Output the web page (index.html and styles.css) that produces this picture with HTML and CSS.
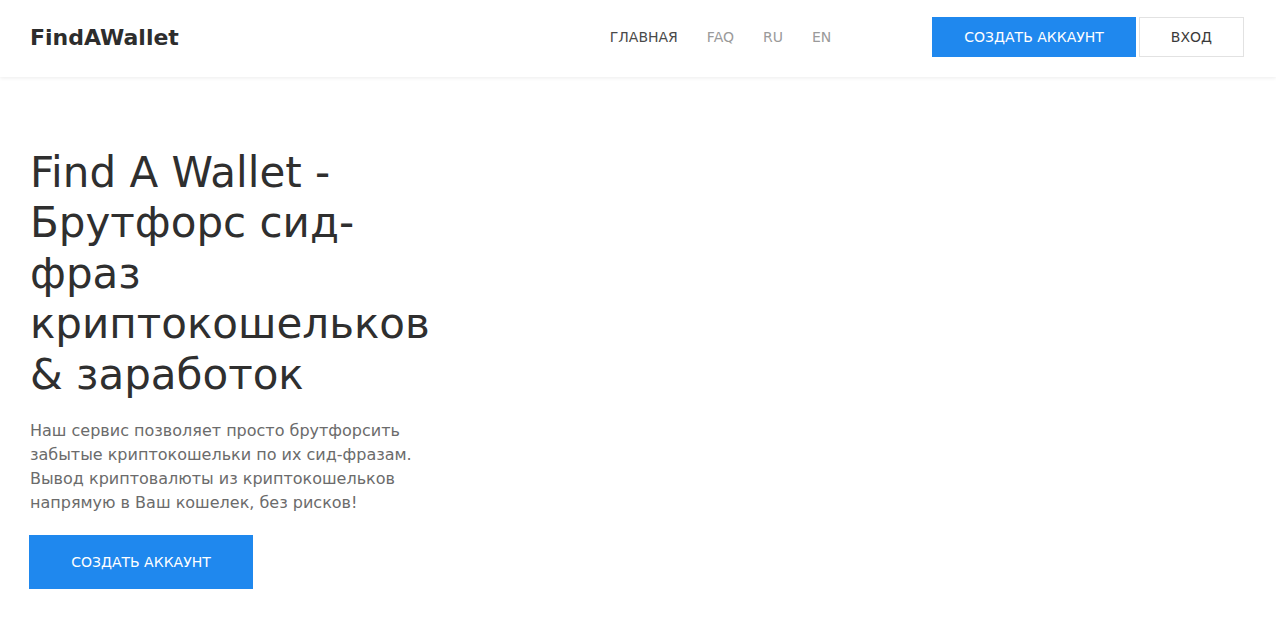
FILE: index.html
```
<!DOCTYPE html>
<html lang="ru">

<head>
    <meta charset="UTF-8">
    <meta name="viewport" content="width=device-width, initial-scale=1.0">
    <title>FindAWallet</title>
    <link rel="stylesheet" href="styles.css">
</head>

<body>
    <header class="header">
        <div class="header__inner">
            <a class="header__logo" href="#">FindAWallet</a>
            <nav class="header__nav">
                <a class="header__link header__link--active" href="#">ГЛАВНАЯ</a>
                <a class="header__link" href="#">FAQ</a>
                <a class="header__link" href="#">RU</a>
                <a class="header__link" href="#">EN</a>
            </nav>
            <div class="header__actions">
                <a class="btn btn--primary" href="#">СОЗДАТЬ АККАУНТ</a>
                <a class="btn btn--outline" href="#">ВХОД</a>
            </div>
        </div>
    </header>

    <main class="hero">
        <div class="hero__content">
            <h1 class="hero__title">Find A Wallet - Брутфорс сид-фраз криптокошельков &amp; заработок</h1>
            <p class="hero__text">
                Наш сервис позволяет просто брутфорсить забытые криптокошельки по их сид-фразам.
                Вывод криптовалюты из криптокошельков напрямую в Ваш кошелек, без рисков!
            </p>
            <a class="btn btn--primary btn--large" href="#">СОЗДАТЬ АККАУНТ</a>
        </div>
    </main>
</body>

</html>
```

FILE: styles.css
```
* {
    box-sizing: border-box;
}

body {
    margin: 0;
    font-family: "DejaVu Sans", "Open Sans", sans-serif;
    color: #333333;
    background: #ffffff;
}

a {
    text-decoration: none;
}

/* header */
.header {
    background: #ffffff;
    box-shadow: 0 1px 4px rgba(0, 0, 0, 0.08);
}

.header__inner {
    height: 77px;
    padding: 0 32px 3px 30px;
    display: flex;
    align-items: center;
}

.header__logo {
    flex: 1;
    font-size: 22px;
    font-weight: 700;
    color: #2d2d2d;
}

.header__nav {
    display: flex;
    gap: 29px;
    margin-right: 101px;
}

.header__link {
    font-size: 14px;
    color: #9a9a9a;
}

.header__link--active {
    color: #4a4a4a;
}

.header__actions {
    display: flex;
    gap: 3px;
}

/* buttons */
.btn {
    display: inline-flex;
    align-items: center;
    justify-content: center;
    height: 40px;
    padding: 0 31px;
    font-size: 14px;
    border: 1px solid transparent;
}

.btn--primary {
    background: #1f88ee;
    color: #ffffff;
}

.btn--outline {
    border-color: #e2e2e2;
    color: #3a3a3a;
}

.btn--large {
    width: 224px;
    height: 54px;
    padding: 0;
}

/* hero */
.hero {
    padding: 71px 30px 40px 29px;
}

.hero__content {
    width: 410px;
}

.hero__title {
    margin: 0 0 19px 1px;
    font-size: 42px;
    font-weight: 400;
    line-height: 1.2;
    color: #2f2f2f;
}

.hero__text {
    margin: 0 0 20px 1px;
    font-size: 16px;
    line-height: 24px;
    color: #6b6b6b;
}
```
